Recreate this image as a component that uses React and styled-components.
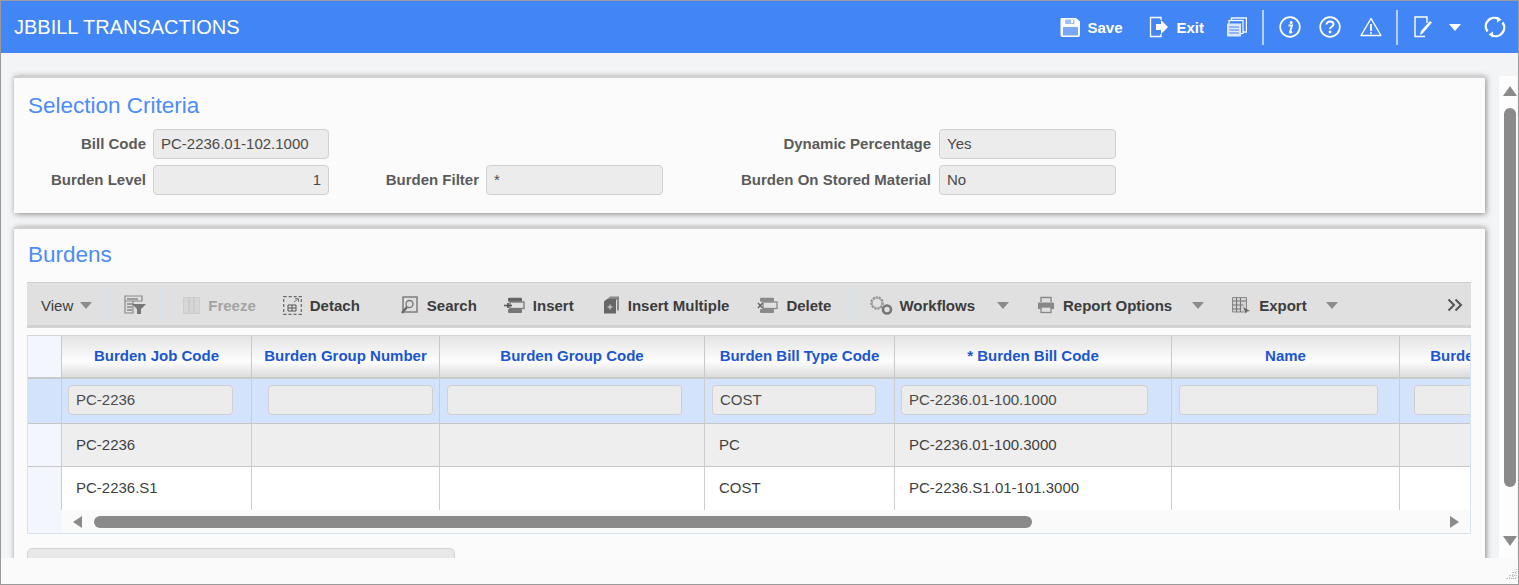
import React from 'react';
import styled, { createGlobalStyle } from 'styled-components';

const GlobalStyle = createGlobalStyle`
  html, body {
    margin: 0;
    padding: 0;
    overflow: hidden;
    background: #fafafa;
    font-family: 'Liberation Sans', Arial, sans-serif;
  }
  * { box-sizing: border-box; }
`;

const Frame = styled.div`
  width: 1519px;
  height: 585px;
  display: flex;
  flex-direction: column;
  border: 1px solid #9a9a9a;
  overflow: hidden;
  background: #f3f4f6;
`;

const Header = styled.header`
  flex: none;
  height: 52px;
  padding-right: 12px;
  display: flex;
  align-items: center;
  background: #4286f5;
  color: #fff;
`;
const AppTitle = styled.h1`
  margin: 0 auto 0 13px;
  font-size: 20px;
  font-weight: 400;
  color: #fff;
`;
const HeaderAction = styled.div`
  display: flex;
  align-items: center;
  gap: ${(p) => p.$gap ?? 8}px;
  margin-left: ${(p) => p.$ml}px;
  font-size: 15px;
  font-weight: 700;
`;
const HeaderDivider = styled.span`
  width: 2px;
  height: 35px;
  margin-left: ${(p) => p.$ml}px;
  background: #b5cefa;
`;

const Body = styled.div`
  flex: none;
  height: 505px;
  display: flex;
`;
const Content = styled.main`
  width: 1498px;
  padding: 23px 13px 0;
  overflow: hidden;
  flex: none;
`;
const Panel = styled.section`
  width: 1471px;
  margin-bottom: 14px;
  padding: ${(p) => p.$pt}px 13px 0;
  height: ${(p) => p.$height}px;
  background: #fbfbfb;
  border-top: 2px solid #d0d0d0;
  box-shadow: 1px 1px 6px rgba(0, 0, 0, 0.45);
`;
const PanelTitle = styled.h2`
  margin: 0 0 0 1px;
  height: 28px;
  font-size: 22.5px;
  line-height: 28px;
  font-weight: 400;
  color: #4c8cf7;
`;

const Form = styled.div`
  display: grid;
  grid-template-columns: 126px 176px 157px 177px 276px 177px;
  grid-auto-rows: 30px;
  row-gap: 6px;
  margin-top: 9px;
`;
const FieldLabel = styled.label`
  display: flex;
  align-items: center;
  justify-content: flex-end;
  padding: 0 ${(p) => p.$pr ?? 7}px 2px 0;
  font-size: 15px;
  font-weight: 700;
  color: #5b5b5b;
  white-space: nowrap;
`;
const Field = styled.input.attrs({ readOnly: true })`
  width: 100%;
  height: 30px;
  padding: 0 7px 2px;
  border: 1px solid #d0d0d0;
  border-radius: 4px;
  background: #ececec;
  font: 15px 'Liberation Sans', Arial, sans-serif;
  color: #4a4a4a;
  text-align: ${(p) => (p.$right ? 'right' : 'left')};
  outline: none;
`;
const Spacer = styled.span``;

const Toolbar = styled.div`
  width: 1444px;
  height: 46px;
  margin-top: 13px;
  padding-top: 2px;
  display: flex;
  align-items: center;
  background: #e0e0e0;
  border-top: 1px solid #cfcfcf;
  border-bottom: 3px solid #d2d2d2;
  font-size: 15px;
  color: #3c3c3c;
`;
const ToolItem = styled.div`
  flex: none;
  display: flex;
  align-items: center;
  gap: ${(p) => p.$gap ?? 8}px;
  margin-left: ${(p) => p.$ml}px;
  font-weight: ${(p) => (p.$plain ? 400 : 700)};
  color: ${(p) => (p.$disabled ? '#a4a4a4' : '#3c3c3c')};
  white-space: nowrap;
`;
const ToolDivider = styled.span`
  flex: none;
  width: 1px;
  height: 38px;
  margin-left: ${(p) => p.$ml}px;
  background: #d8e0e8;
`;
const Caret = styled.span`
  flex: none;
  width: 0;
  height: 0;
  margin-left: ${(p) => p.$ml ?? 0}px;
  border-left: ${(p) => p.$size ?? 6}px solid transparent;
  border-right: ${(p) => p.$size ?? 6}px solid transparent;
  border-top: ${(p) => (p.$size ?? 6) + 1}px solid ${(p) => p.$color ?? '#8b8b8b'};
`;

const GridBox = styled.div`
  width: 1444px;
  height: 199px;
  margin-top: 7px;
  border: 1px solid #d8e3ee;
  border-top-color: #d4d4d4;
  overflow: hidden;
  background: #fff;
`;
const GridClip = styled.div`
  height: 174px;
  overflow: hidden;
`;
const Table = styled.table`
  table-layout: fixed;
  width: 1486px;
  border-collapse: separate;
  border-spacing: 0;
`;
const Col = styled.col`
  width: ${(p) => p.$w}px;
`;
const HeadCell = styled.th`
  height: 43px;
  padding: 0 0 2px;
  border-right: 1px solid #c9c9c9;
  border-bottom: 2px solid #c9c9c9;
  background: linear-gradient(#e4e4e4, #fdfdfd 62%, #dcdcdc);
  font-size: 15px;
  font-weight: 700;
  color: #1a56cf;
  white-space: nowrap;
  overflow: hidden;
`;
const MarkerHead = styled.th`
  padding: 0;
  border-right: 1px solid #c9c9c9;
  border-bottom: 2px solid #c9c9c9;
  background: #f3f7fd;
`;
const Cell = styled.td`
  height: ${(p) => p.$height}px;
  padding: 0 0 ${(p) => (p.$last ? 4 : 2)}px 14px;
  border-right: 1px solid #cdcdcd;
  border-bottom: ${(p) => (p.$last ? 0 : 1)}px solid #c8c8c8;
  background: ${(p) => p.$bg};
  font-size: 15px;
  color: #3f3f3f;
  white-space: nowrap;
  overflow: hidden;
`;
const EditCell = styled(Cell)`
  padding: 0 ${(p) => p.$pr}px 2px ${(p) => p.$pl}px;
`;
const Marker = styled.td`
  padding: 0;
  border-right: 1px solid #cdcdcd;
  border-bottom: ${(p) => (p.$last ? 0 : 1)}px solid #c8c8c8;
  background: ${(p) => p.$bg};
`;
const GridField = styled(Field)`
  display: block;
`;

const HScroll = styled.div`
  height: 23px;
  display: flex;
  align-items: center;
  background: #fafafa;
  box-shadow: inset 34px 0 0 #f3f7fd;
`;
const HThumb = styled.div`
  width: 938px;
  height: 12px;
  margin-left: 12px;
  border-radius: 6px;
  background: #8a8a8a;
`;
const ArrowSide = styled.span`
  flex: none;
  width: 0;
  height: 0;
  margin-left: ${(p) => p.$ml}px;
  border-top: 6px solid transparent;
  border-bottom: 6px solid transparent;
  ${(p) => (p.$dir === 'left' ? 'border-right: 9px solid #8a8a8a;' : 'border-left: 9px solid #8a8a8a;')}
`;

const VScroll = styled.aside`
  flex: none;
  width: 18px;
  margin-top: 23px;
  padding: 10px 0 0 4px;
  display: flex;
  flex-direction: column;
  background: #fdfdfd;
`;
const ArrowUp = styled.span`
  width: 0;
  height: 0;
  border-left: 7px solid transparent;
  border-right: 7px solid transparent;
  border-bottom: 10px solid #8a8a8a;
`;
const ArrowDown = styled.span`
  width: 0;
  height: 0;
  margin-top: 49px;
  border-left: 7px solid transparent;
  border-right: 7px solid transparent;
  border-top: 10px solid #8a8a8a;
`;
const VThumb = styled.div`
  width: 12px;
  height: 379px;
  margin: 12px 0 0 1px;
  border-radius: 6px;
  background: #8a8a8a;
`;

const Footer = styled.div`
  flex: 1;
  position: relative;
  background: #fafafa;
`;
const Grip = styled.svg`
  position: absolute;
  right: 1px;
  bottom: 4px;
`;
const NextBox = styled.div`
  width: 428px;
  height: 40px;
  margin-top: 14px;
  border: 1px solid #d4d4d4;
  border-radius: 5px 5px 0 0;
  background: #e8e8e8;
`;

const Svg = ({ w = 20, h = 20, children }) => (
  <svg width={w} height={h} viewBox={`0 0 ${w} ${h}`} fill="none">
    {children}
  </svg>
);

const SaveIcon = () => (
  <Svg w={21} h={21}>
    <path d="M2.5 1h13.500l4 3.500v13.500a2 2 0 0 1-2 2h-15.500a2 2 0 0 1-2-2V2.500A1.500 1.500 0 0 1 2.500 1z" fill="#fff" />
    <rect x="5" y="2.500" width="9.500" height="4.500" rx="1" fill="#9dbffa" />
    <rect x="11" y="3" width="2" height="3" fill="#fff" />
    <rect x="3" y="10" width="15" height="8.500" fill="#7aa8f8" />
  </Svg>
);
const ExitIcon = () => (
  <Svg w={20} h={22}>
    <path d="M12 4V1.500H1.500v19H12V18" stroke="#fff" strokeWidth="1.300" />
    <path d="M7 8h5V4l7 7-7 7v-4H7z" fill="#fff" />
  </Svg>
);
const WindowsIcon = () => (
  <Svg w={21} h={21}>
    <rect x="5.500" y="1" width="15" height="14" stroke="#fff" strokeWidth="1.400" />
    <rect x="3" y="3.500" width="14" height="13" stroke="#fff" strokeWidth="1.200" fill="#4286f5" />
    <path d="M1 6.500h14v13H1z" fill="#dbe7fd" />
    <path d="M3 10h10M3 13h10M3 16h10" stroke="#4286f5" strokeWidth="1.200" />
  </Svg>
);
const InfoIcon = () => (
  <Svg w={22} h={22}>
    <circle cx="11" cy="11" r="9.800" stroke="#fff" strokeWidth="1.700" />
    <circle cx="12.200" cy="6.500" r="1.500" fill="#fff" />
    <path d="M9.500 9.500h3.500l-2 6.500c-.2.8.5 1 2.200-.3" stroke="#fff" strokeWidth="1.800" />
  </Svg>
);
const HelpIcon = () => (
  <Svg w={22} h={22}>
    <circle cx="11" cy="11" r="9.800" stroke="#fff" strokeWidth="1.700" />
    <path d="M7.500 8.500C7.700 6.300 9 5.500 11 5.500c2.200 0 3.500 1.200 3.500 2.800 0 2.500-3.500 2.400-3.500 4.700" stroke="#fff" strokeWidth="2" />
    <circle cx="11" cy="16" r="1.400" fill="#fff" />
  </Svg>
);
const WarnIcon = () => (
  <Svg w={22} h={20}>
    <path d="M11 1.500 21 18.500H1z" stroke="#fff" strokeWidth="1.400" strokeLinejoin="round" />
    <path d="M11 7v7" stroke="#fff" strokeWidth="1.800" />
    <circle cx="11" cy="16" r="1" fill="#fff" />
  </Svg>
);
const NoteIcon = () => (
  <Svg w={19} h={22}>
    <path d="M11 20.500H1V1h12v6" stroke="#fff" strokeWidth="1.400" />
    <path d="M6 19l1-4 9-10 2 1.500-9 10.500z" fill="#fff" />
  </Svg>
);
const RefreshIcon = () => (
  <Svg w={22} h={22}>
    <path d="M3.500 15.500A8.500 8.500 0 0 1 14.500 3M18.500 6.500a8.500 8.500 0 0 1-11 12.500" stroke="#fff" strokeWidth="2.400" />
    <path d="M13 .5l4.500 3.300L13 6.500zM9 15.500l-4.500 3 4.500 3z" fill="#fff" />
  </Svg>
);

const FilterIcon = () => (
  <Svg w={22} h={20}>
    <path d="M1 1h17v5H1zM1 6h8v12H1z" stroke="#888" strokeWidth="1.200" />
    <path d="M3 4h11M3 9h6M3 12h5M3 15h5" stroke="#888" strokeWidth="1.400" />
    <path d="M8 9h14l-5 5v5h-4v-5z" fill="#777" />
  </Svg>
);
const FreezeIcon = () => (
  <Svg w={17} h={17}>
    <rect x=".5" y=".5" width="16" height="16" fill="#d6d6d6" stroke="#cdcdcd" />
    <path d="M6 1v15M11 1v15" stroke="#c4c4c4" />
  </Svg>
);
const DetachIcon = () => (
  <Svg w={19} h={19}>
    <rect x=".7" y=".7" width="17.600" height="17.600" stroke="#666" strokeWidth="1.200" strokeDasharray="3 2" />
    <path d="M5 9h8v6H5zM5 12h8M9 9v6" stroke="#555" strokeWidth="1" />
    <path d="M11 6l4-3M12 2.700h3.500V6" stroke="#777" />
  </Svg>
);
const SearchIcon = () => (
  <Svg w={17} h={19}>
    <rect x="2" y="1" width="14" height="15" stroke="#777" strokeWidth="1.400" />
    <circle cx="8.500" cy="8" r="3.500" stroke="#777" strokeWidth="1.300" />
    <path d="M6 11L1 17" stroke="#666" strokeWidth="2.200" />
  </Svg>
);
const InsertIcon = () => (
  <Svg w={21} h={17}>
    <rect x="4" y=".8" width="14" height="4" rx="1" fill="#666" />
    <rect x="6" y="5" width="14" height="6.500" stroke="#777" strokeWidth="1.300" />
    <rect x="4" y="12" width="14" height="4" rx="1" fill="#777" />
    <path d="M0 8.500h8M4 6v5" stroke="#555" strokeWidth="1.700" />
  </Svg>
);
const MultiIcon = () => (
  <Svg w={16} h={18}>
    <path d="M3 3.500 6 .5h9v14h-2V4H3z" fill="#888" />
    <path d="M0 5.500 3 3h9v14.500H0z" fill="#666" />
    <path d="M6 8.500v5M3.500 11h5" stroke="#ddd" />
  </Svg>
);
const DeleteIcon = () => (
  <Svg w={21} h={17}>
    <rect x="3" y=".8" width="14" height="4" rx="1" fill="#8a8a8a" />
    <rect x="6" y="5" width="14" height="6.500" stroke="#888" strokeWidth="1.300" />
    <rect x="3" y="12" width="14" height="4" rx="1" fill="#8a8a8a" />
    <path d="M1 6l4.500 5M5.500 6L1 11" stroke="#666" strokeWidth="1.400" />
  </Svg>
);
const GearIcon = () => (
  <Svg w={24} h={20}>
    <circle cx="8" cy="8" r="5.500" stroke="#8a8a8a" strokeWidth="2.400" strokeDasharray="2 1" />
    <circle cx="8" cy="8" r="5" stroke="#aaa" strokeWidth="1" />
    <circle cx="18" cy="14.500" r="4" stroke="#777" strokeWidth="2.600" />
  </Svg>
);
const PrintIcon = () => (
  <Svg w={18} h={18}>
    <path d="M4 6V1.500h10V6" stroke="#888" strokeWidth="1.400" />
    <path d="M1 7.500a1 1 0 0 1 1-1h14a1 1 0 0 1 1 1V13h-3v-2H4v2H1z" fill="#888" />
    <rect x="4" y="11" width="10" height="5.500" stroke="#888" strokeWidth="1.300" />
  </Svg>
);
const ExportIcon = () => (
  <Svg w={19} h={17}>
    <path d="M.5.500h14V15H.5z" fill="#d2d2d2" stroke="#888" />
    <path d="M.5 4h14M.5 8h11M.5 12h8M4.500 1v14M8.500 1v14" stroke="#777" />
    <path d="M11 10l7 4-3 .5-1 2z" fill="#666" />
  </Svg>
);
const MoreIcon = () => (
  <Svg w={16} h={14}>
    <path d="M1.500 1.500l5.500 5.500-5.500 5.500M8.500 1.500l5.500 5.500-5.500 5.500" stroke="#555" strokeWidth="2" />
  </Svg>
);

const columns = [
  { title: 'Burden Job Code', width: 190, pl: 6, pr: 18 },
  { title: 'Burden Group Number', width: 188, pl: 16, pr: 6 },
  { title: 'Burden Group Code', width: 265, pl: 7, pr: 22 },
  { title: 'Burden Bill Type Code', width: 190, pl: 7, pr: 18 },
  { title: '* Burden Bill Code', width: 277, pl: 6, pr: 23 },
  { title: 'Name', width: 228, pl: 7, pr: 21 },
  { title: 'Burden', width: 114, pl: 14, pr: 0 },
];

const rows = [
  ['PC-2236', '', '', 'PC', 'PC-2236.01-100.3000', '', ''],
  ['PC-2236.S1', '', '', 'COST', 'PC-2236.S1.01-101.3000', '', ''],
];
const editRow = ['PC-2236', '', '', 'COST', 'PC-2236.01-100.1000', '', ''];

export default function App() {
  return (
    <>
      <GlobalStyle />
      <Frame>
        <Header>
          <AppTitle>JBBILL TRANSACTIONS</AppTitle>
          <HeaderAction $ml={0} $gap={6}><SaveIcon />Save</HeaderAction>
          <HeaderAction $ml={27} $gap={7}><ExitIcon />Exit</HeaderAction>
          <HeaderAction $ml={22}><WindowsIcon /></HeaderAction>
          <HeaderDivider $ml={15} />
          <HeaderAction $ml={15}><InfoIcon /></HeaderAction>
          <HeaderAction $ml={18}><HelpIcon /></HeaderAction>
          <HeaderAction $ml={19}><WarnIcon /></HeaderAction>
          <HeaderDivider $ml={14} />
          <HeaderAction $ml={16}><NoteIcon /></HeaderAction>
          <Caret $ml={16} $size={6} $color="#fff" />
          <HeaderAction $ml={23}><RefreshIcon /></HeaderAction>
        </Header>

        <Body>
          <Content>
            <Panel $height={137} $pt={14}>
              <PanelTitle>Selection Criteria</PanelTitle>
              <Form>
                <FieldLabel>Bill Code</FieldLabel>
                <Field value="PC-2236.01-102.1000" />
                <Spacer />
                <Spacer />
                <FieldLabel $pr={8}>Dynamic Percentage</FieldLabel>
                <Field value="Yes" />
                <FieldLabel>Burden Level</FieldLabel>
                <Field value="1" $right />
                <FieldLabel>Burden Filter</FieldLabel>
                <Field value="*" />
                <FieldLabel $pr={8}>Burden On Stored Material</FieldLabel>
                <Field value="No" />
              </Form>
            </Panel>

            <Panel $height={400} $pt={12}>
              <PanelTitle>Burdens</PanelTitle>
              <Toolbar>
                <ToolItem $ml={14} $plain $gap={7}>View<Caret /></ToolItem>
                <ToolDivider $ml={16} />
                <ToolItem $ml={15}><FilterIcon /></ToolItem>
                <ToolDivider $ml={14} />
                <ToolItem $ml={22} $disabled><FreezeIcon />Freeze</ToolItem>
                <ToolItem $ml={27}><DetachIcon />Detach</ToolItem>
                <ToolDivider $ml={19} />
                <ToolItem $ml={21} $gap={9}><SearchIcon />Search</ToolItem>
                <ToolItem $ml={27}><InsertIcon />Insert</ToolItem>
                <ToolItem $ml={30}><MultiIcon />Insert Multiple</ToolItem>
                <ToolItem $ml={28}><DeleteIcon />Delete</ToolItem>
                <ToolDivider $ml={19} />
                <ToolItem $ml={18} $gap={6}><GearIcon />Workflows</ToolItem>
                <Caret $ml={22} />
                <ToolItem $ml={28}><PrintIcon />Report Options</ToolItem>
                <Caret $ml={20} />
                <ToolItem $ml={28}><ExportIcon />Export</ToolItem>
                <Caret $ml={19} />
                <ToolItem $ml={109}><MoreIcon /></ToolItem>
              </Toolbar>

              <GridBox>
                <GridClip>
                  <Table>
                    <colgroup>
                      <Col $w={34} />
                      {columns.map((c) => (
                        <Col key={c.title} $w={c.width} />
                      ))}
                    </colgroup>
                    <thead>
                      <tr>
                        <MarkerHead />
                        {columns.map((c) => (
                          <HeadCell key={c.title}>{c.title}</HeadCell>
                        ))}
                      </tr>
                    </thead>
                    <tbody>
                      <tr>
                        <Marker $bg="#d3e3fb" />
                        {columns.map((c, i) => (
                          <EditCell key={c.title} $height={45} $bg="#d3e3fb" $pl={c.pl} $pr={c.pr}>
                            <GridField value={editRow[i]} />
                          </EditCell>
                        ))}
                      </tr>
                      {rows.map((row, r) => (
                        <tr key={row[0]}>
                          <Marker $bg="#f3f7fd" $last={r === 1} />
                          {row.map((value, i) => (
                            <Cell
                              key={columns[i].title}
                              $height={r === 0 ? 43 : 44}
                              $last={r === 1}
                              $bg={r === 0 ? '#eeeeee' : '#ffffff'}
                            >
                              {value}
                            </Cell>
                          ))}
                        </tr>
                      ))}
                    </tbody>
                  </Table>
                </GridClip>
                <HScroll>
                  <ArrowSide $dir="left" $ml={45} />
                  <HThumb />
                  <ArrowSide $dir="right" $ml={418} />
                </HScroll>
              </GridBox>
              <NextBox />
            </Panel>
          </Content>
          <VScroll>
            <ArrowUp />
            <VThumb />
            <ArrowDown />
          </VScroll>
        </Body>
        <Footer>
          <Grip width="11" height="12" viewBox="0 0 11 12">
            <path d="M10 1v10M7 4v7M4 7v4M1 10v1M1 10.500h9M4 7.500h6M7 4.500h3" stroke="#b5b5b5" strokeDasharray="1 1" />
          </Grip>
        </Footer>
      </Frame>
    </>
  );
}
